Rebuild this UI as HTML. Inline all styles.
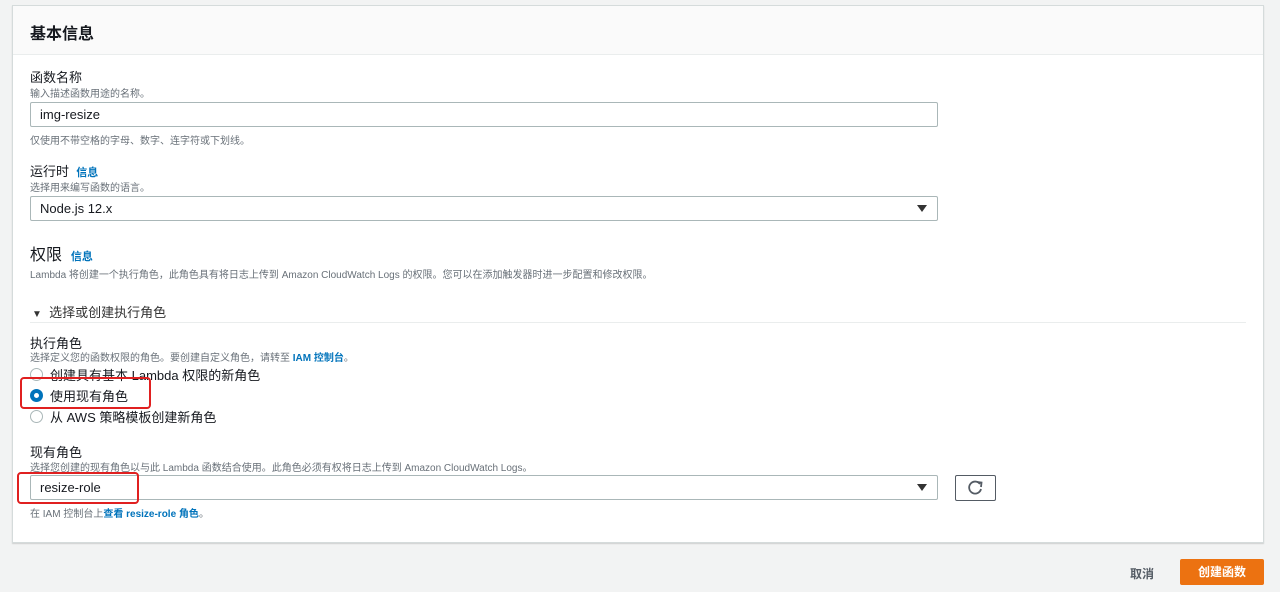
<!DOCTYPE html>
<html><head><meta charset="utf-8"><style>
*{box-sizing:border-box;margin:0;padding:0}
body{width:1280px;height:592px;background:#f2f3f3;font-family:"Liberation Sans","Noto Sans CJK SC",sans-serif;color:#16191f;position:relative;overflow:hidden}
.panel{position:absolute;left:12px;top:5px;width:1252px;height:538px;background:#fff;border:1px solid #d5dbdb;box-shadow:0 1px 1px rgba(0,0,0,.15)}
.hdr{height:49px;background:#fafafa;border-bottom:1px solid #eaeded;padding:14px 17px;font-size:16px;font-weight:bold}
.a{position:absolute;white-space:nowrap}
.lbl{font-size:13px;color:#16191f}
.sub{font-size:10px;color:#687078}
.lnk{color:#0073bb;font-weight:bold;font-size:11px}
.inp{position:absolute;left:17px;width:908px;height:25px;border:1px solid #aab7b8;border-radius:2px;font-size:13px;padding:4px 9px}
.arr{position:absolute;right:10px;top:8px;width:0;height:0;border-left:5px solid transparent;border-right:5px solid transparent;border-top:7px solid #333}
.rad{position:absolute;left:17px;width:13px;height:13px;border:1px solid #aab7b8;border-radius:50%}
.rad.on{border:4px solid #0073bb}
.red{position:absolute;border:2px solid #e02020;border-radius:4px}
</style></head><body>
<div class="panel">
<div class="hdr">基本信息</div>
<div class="a lbl" style="left:17px;top:61px">函数名称</div>
<div class="a sub" style="left:17px;top:79px">输入描述函数用途的名称。</div>
<div class="inp" style="top:96px">img-resize</div>
<div class="a sub" style="left:17px;top:126px">仅使用不带空格的字母、数字、连字符或下划线。</div>
<div class="a lbl" style="left:17px;top:155px">运行时 &nbsp;<span class="lnk">信息</span></div>
<div class="a sub" style="left:17px;top:173px">选择用来编写函数的语言。</div>
<div class="inp" style="top:190px">Node.js 12.x<div class="arr"></div></div>
<div class="a" style="left:17px;top:235px;font-size:16px">权限 &nbsp;<span class="lnk">信息</span></div>
<div class="a sub" style="left:17px;top:260px">Lambda 将创建一个执行角色，此角色具有将日志上传到 Amazon CloudWatch Logs 的权限。您可以在添加触发器时进一步配置和修改权限。</div>
<div class="a" style="left:19px;top:296px;font-size:13px;color:#333"><span style="font-size:10px">▼</span>&nbsp; 选择或创建执行角色</div>
<div class="a" style="left:17px;top:316px;width:1216px;border-top:1px solid #eaeded"></div>
<div class="a lbl" style="left:17px;top:327px">执行角色</div>
<div class="a sub" style="left:17px;top:343px">选择定义您的函数权限的角色。要创建自定义角色，请转至 <span class="lnk" style="font-size:10px">IAM 控制台</span>。</div>
<div class="rad" style="top:362px"></div><div class="a lbl" style="left:37px;top:359px">创建具有基本 Lambda 权限的新角色</div>
<div class="rad on" style="top:383px"></div><div class="a lbl" style="left:37px;top:380px">使用现有角色</div>
<div class="rad" style="top:404px"></div><div class="a lbl" style="left:37px;top:401px">从 AWS 策略模板创建新角色</div>
<div class="red" style="left:7px;top:371px;width:131px;height:32px"></div>
<div class="a lbl" style="left:17px;top:436px">现有角色</div>
<div class="a sub" style="left:17px;top:453px">选择您创建的现有角色以与此 Lambda 函数结合使用。此角色必须有权将日志上传到 Amazon CloudWatch Logs。</div>
<div class="inp" style="top:469px">resize-role<div class="arr"></div></div>
<div class="a" style="left:942px;top:469px;width:41px;height:26px;border:1px solid #545b64;border-radius:2px">
<svg width="41" height="26" viewBox="0 0 41 26" style="position:absolute;left:-1px;top:-1px"><path d="M25 9 A6 6 0 1 0 26 14" fill="none" stroke="#545b64" stroke-width="1.8"/><path d="M22 7 L26.5 7.5 L26 12" fill="none" stroke="#545b64" stroke-width="1.8"/></svg></div>
<div class="red" style="left:4px;top:466px;width:122px;height:32px"></div>
<div class="a sub" style="left:17px;top:499px">在 IAM 控制台上<span class="lnk" style="font-size:10px">查看 resize-role 角色</span>。</div>
</div>
<div class="a" style="left:1130px;top:565px;font-size:12px;font-weight:bold;color:#545b64">取消</div>
<div class="a" style="left:1180px;top:559px;width:84px;height:26px;background:#ec7211;border-radius:2px;color:#fff;font-size:12px;font-weight:bold;text-align:center;line-height:26px">创建函数</div>
</body></html>
